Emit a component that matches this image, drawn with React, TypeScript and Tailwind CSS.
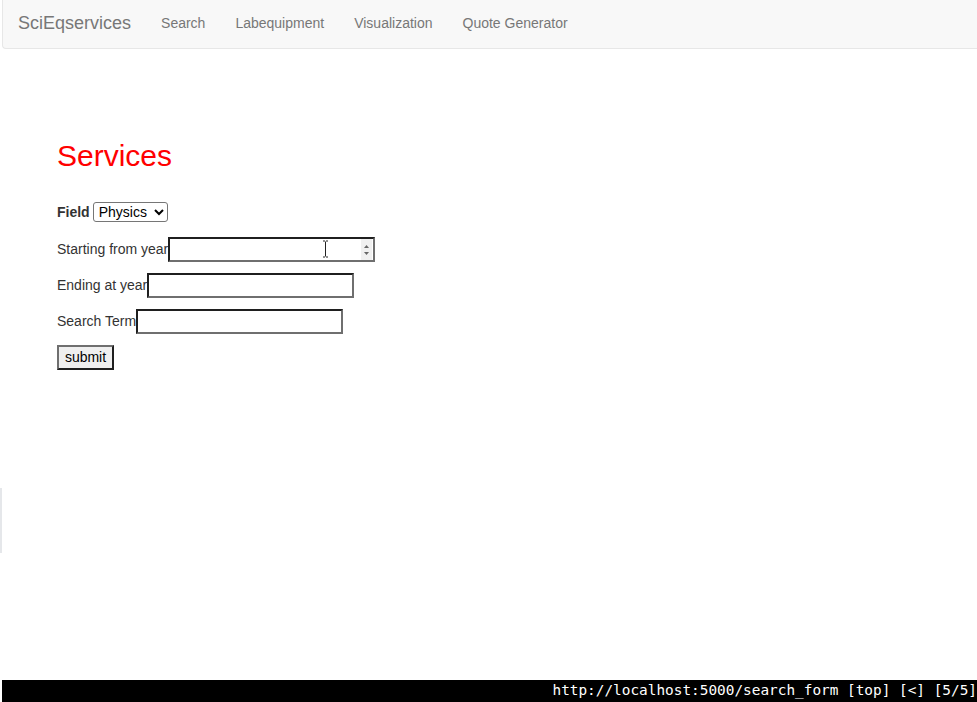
import { useState } from "react";

const links = ["Search", "Labequipment", "Visualization", "Quote Generator"];

const inputCls =
  "h-[25px] w-[207px] border-2 border-t-[#1f1f1f] border-l-[#1f1f1f] border-b-[#6f6f6f] border-r-[#6f6f6f] bg-white px-[2px] text-[13.33px] text-black outline-none";

const App = () => {
  // states
  const [field, setField] = useState("Physics");
  const [start, setStart] = useState("");
  const [end, setEnd] = useState("");
  const [term, setTerm] = useState("");

  return (
    <div className="flex min-h-screen bg-white font-['Liberation_Sans',Arial,sans-serif] text-[14px] text-[#333]">
      {/* Smal vänsterkant */}
      <div className="w-[2px] shrink-0">
        <div className="mt-[488px] h-[65px] w-[2px] bg-[#e5e7ea]" />
      </div>

      <div className="flex min-h-screen flex-1 flex-col overflow-hidden">
        {/* Navbar */}
        <nav className="flex h-[49px] shrink-0 items-center rounded-bl-[4px] border-b border-l border-[#e7e7e7] bg-[#f8f8f8] pb-[1px]">
          <a className="px-[15px] text-[18px] text-[#777]">SciEqservices</a>
          {links.map((link) => (
            <a key={link} className="px-[15px] text-[14px] text-[#777]">
              {link}
            </a>
          ))}
        </nav>

        {/* Innehåll */}
        <main className="flex-1 pl-[55px] pt-[90px]">
          <h1 className="text-[30px] leading-[33px] text-[#ff0000]">Services</h1>

          <form className="mt-[28px] flex flex-col" onSubmit={(e) => e.preventDefault()}>
            <div className="mb-[13px] flex h-[24px] items-center">
              <label className="mr-[3px] font-bold">Field</label>
              <select
                value={field}
                onChange={(e) => setField(e.target.value)}
                className="h-[20px] w-[75px] rounded-[3px] border border-[#767676] bg-white pl-[1px] text-[14px] text-black"
              >
                <option>Physics</option>
                <option>Chemistry</option>
                <option>Biology</option>
              </select>
            </div>

            <div className="mb-[11px] flex h-[25px] items-center">
              <label>Starting from year</label>
              <div className="relative">
                <input value={start} onChange={(e) => setStart(e.target.value)} className={inputCls} />
                {/* Spinner och muspekare */}
                <div className="absolute right-[3px] top-[2px] flex h-[21px] w-[11px] flex-col items-center justify-center gap-[4px] bg-[#f0f0f0]">
                  <svg width="5" height="3" viewBox="0 0 5 3"><path d="M2.5 0L5 3H0z" fill="#666" /></svg>
                  <svg width="5" height="3" viewBox="0 0 5 3"><path d="M0 0h5L2.5 3z" fill="#666" /></svg>
                </div>
                <svg className="absolute left-[154px] top-[3px]" width="7" height="18" viewBox="0 0 7 18">
                  <path d="M1 1h2M4 1h2M3.5 1.5v15M1 17h2M4 17h2" stroke="#fff" strokeWidth="2.5" />
                  <path d="M1 1h2M4 1h2M3.5 1.5v15M1 17h2M4 17h2" stroke="#222" strokeWidth="1" />
                </svg>
              </div>
            </div>

            <div className="mb-[11px] flex h-[25px] items-center">
              <label>Ending at year</label>
              <input value={end} onChange={(e) => setEnd(e.target.value)} className={inputCls} />
            </div>

            <div className="mb-[11px] flex h-[25px] items-center">
              <label>Search Term</label>
              <input value={term} onChange={(e) => setTerm(e.target.value)} className={inputCls} />
            </div>

            <div className="flex">
              <button
                type="submit"
                className="h-[25px] w-[57px] border-2 border-t-[#6f6f6f] border-l-[#6f6f6f] border-b-[#1f1f1f] border-r-[#1f1f1f] bg-[#efefef] text-[14px] text-black"
              >
                submit
              </button>
            </div>
          </form>
        </main>

        {/* Statusrad */}
        <div className="flex h-[22px] shrink-0 items-center justify-end overflow-hidden whitespace-pre bg-black font-['DejaVu_Sans_Mono',monospace] text-[14.4px] text-white">
          http://localhost:5000/search_form [top] [&lt;] [5/5]
        </div>
      </div>
    </div>
  );
};

export default App;
